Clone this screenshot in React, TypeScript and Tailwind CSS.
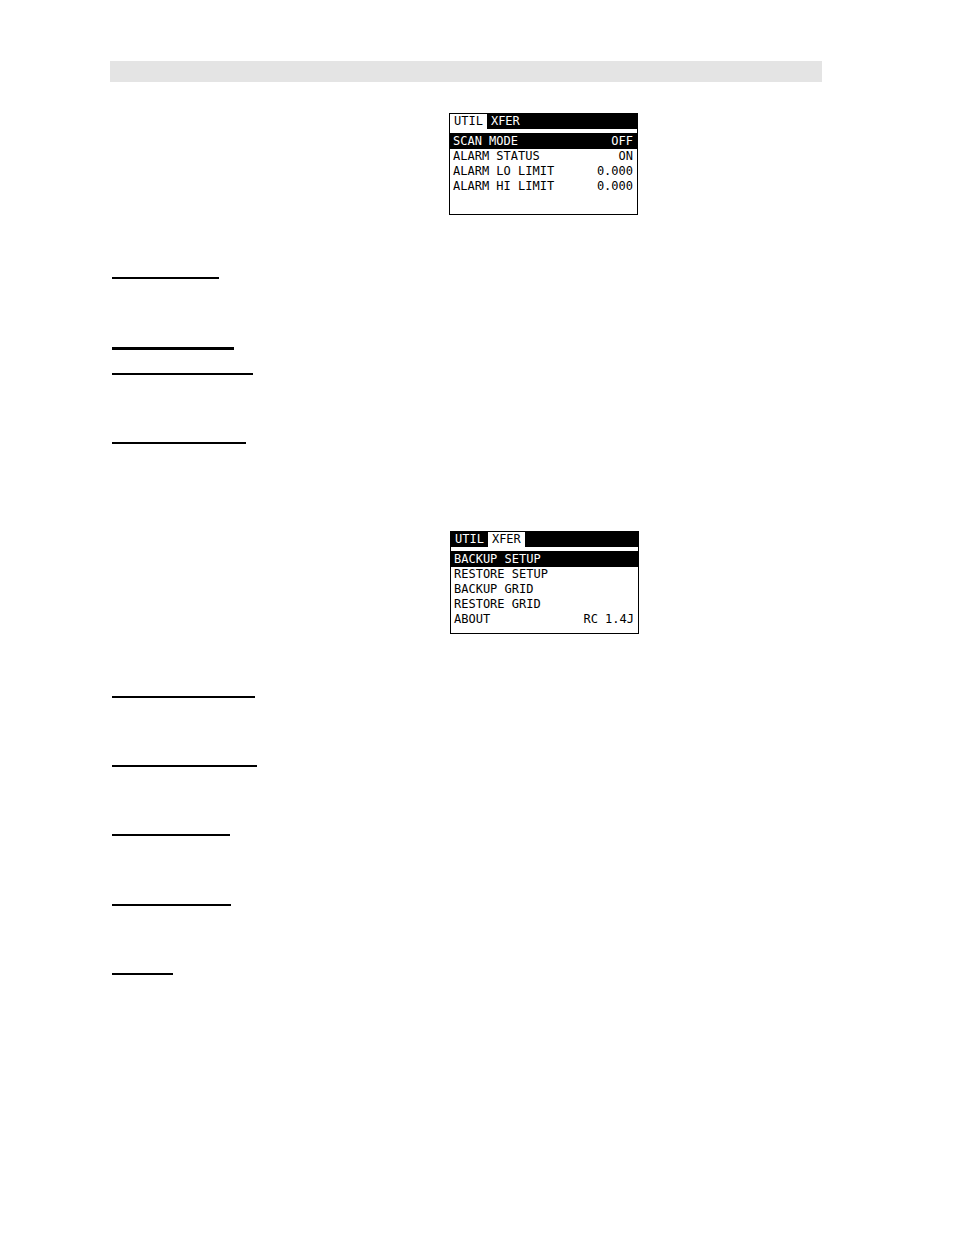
import { cx } from "class-variance-authority";

type Row = { label: string; value?: string };

const tabs = ["UTIL", "XFER"];

const utilRows: Row[] = [
  { label: "SCAN MODE", value: "OFF" },
  { label: "ALARM STATUS", value: "ON" },
  { label: "ALARM LO LIMIT", value: "0.000" },
  { label: "ALARM HI LIMIT", value: "0.000" },
];

const xferRows: Row[] = [
  { label: "BACKUP SETUP" },
  { label: "RESTORE SETUP" },
  { label: "BACKUP GRID" },
  { label: "RESTORE GRID" },
  { label: "ABOUT", value: "RC 1.4J" },
];

function MenuScreen({ active, rows, className }: { active: string; rows: Row[]; className?: string }) {
  return (
    <section
      className={cx(
        "w-[189px] border border-black bg-white text-black text-[12px] leading-[15px] font-['DejaVu_Sans_Mono',monospace]",
        className
      )}
    >
      <nav className="flex bg-black mb-1">
        {tabs.map((tab) => (
          <button
            key={tab}
            type="button"
            className={cx("px-1 whitespace-nowrap", tab === active ? "bg-white text-black" : "bg-black text-white")}
          >
            {tab}
          </button>
        ))}
      </nav>
      <ul>
        {rows.map((row, i) => (
          <li key={row.label}>
            <button
              type="button"
              className={cx("flex w-full justify-between pl-[3px] pr-1", i === 0 && "bg-black text-white pt-px")}
            >
              <span>{row.label}</span>
              <span>{row.value}</span>
            </button>
          </li>
        ))}
      </ul>
    </section>
  );
}

function Rule({ className }: { className: string }) {
  return <hr className={cx("ml-0.5 border-black", className)} />;
}

export default function App() {
  return (
    <main className="min-h-screen bg-white pl-[110px] pr-[132px] pt-[61px] pb-16">
      <header className="h-[21px] bg-[#e4e4e4]" />

      <MenuScreen active="UTIL" rows={utilRows} className="mt-[31px] ml-[339px] pb-5" />

      {/* Utility menu headings */}
      <Rule className="mt-[62px] w-[107px] border-t-2" />
      <Rule className="mt-[68px] w-[122px] border-t-3" />
      <Rule className="mt-[23px] w-[141px] border-t-2" />
      <Rule className="mt-[67px] w-[134px] border-t-2" />

      <MenuScreen active="XFER" rows={xferRows} className="mt-[87px] ml-[340px] pb-1.5" />

      {/* Transfer menu headings */}
      <Rule className="mt-[62px] w-[143px] border-t-2" />
      <Rule className="mt-[67px] w-[145px] border-t-2" />
      <Rule className="mt-[67px] w-[118px] border-t-2" />
      <Rule className="mt-[68px] w-[119px] border-t-2" />
      <Rule className="mt-[67px] w-[61px] border-t-2" />
    </main>
  );
}
